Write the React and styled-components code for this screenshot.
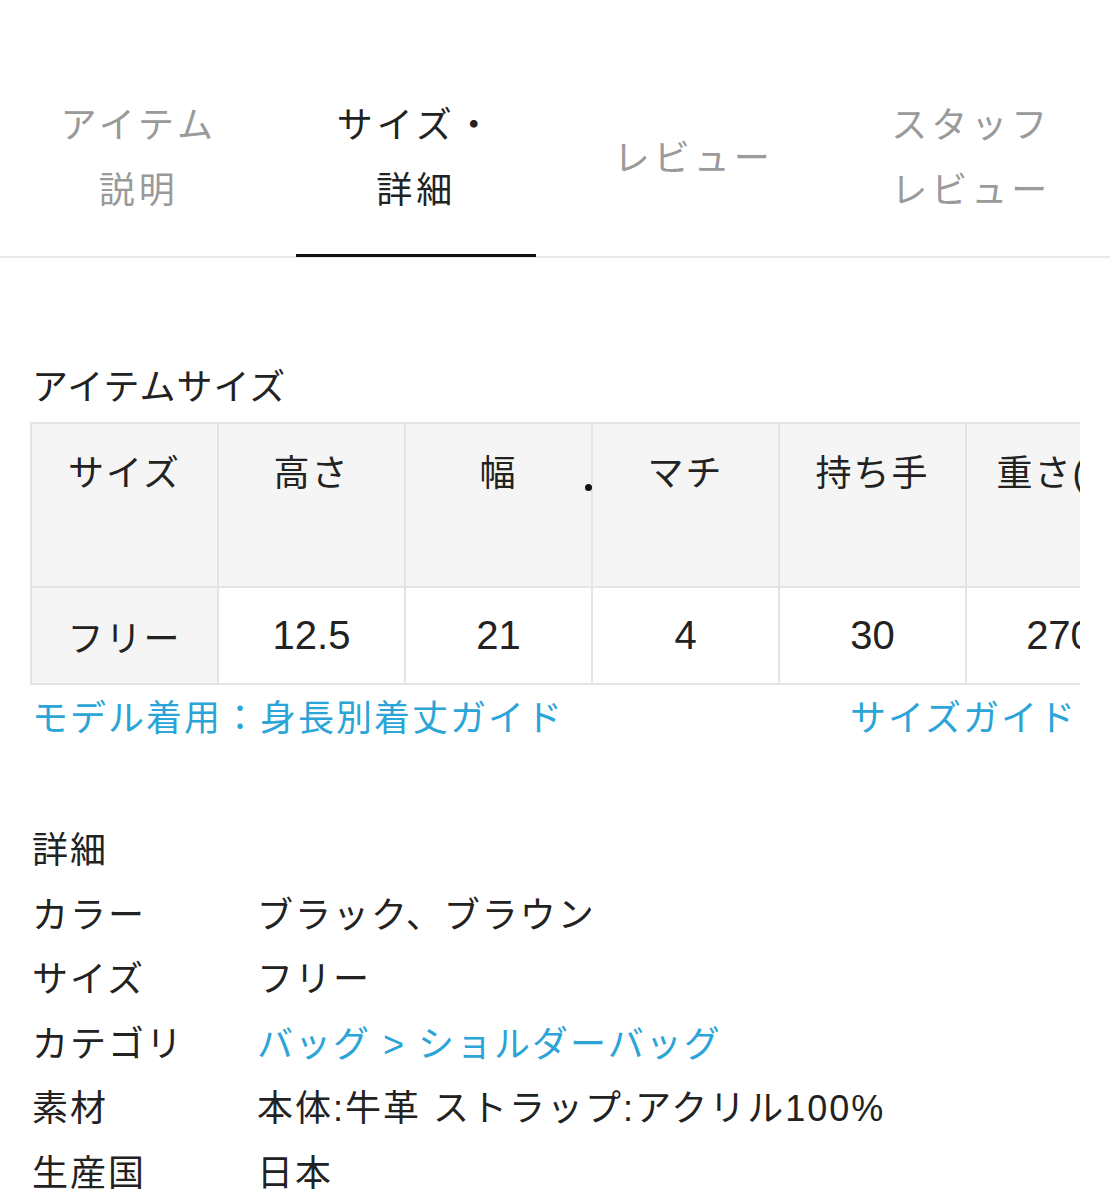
import React from "react";
import styled, { createGlobalStyle } from "styled-components";

const Global = createGlobalStyle`
  html, body { margin: 0; padding: 0; background: #fff; }
  body {
    font-family: "Liberation Sans", "Noto Sans CJK JP", sans-serif;
    color: #222;
    -webkit-font-smoothing: antialiased;
  }
  * { box-sizing: border-box; }
`;

const Page = styled.div`
  width: 1110px;
  min-height: 1200px;
  overflow: hidden;
`;

const TabBar = styled.nav`
  display: grid;
  grid-template-columns: repeat(4, 1fr);
  height: 258px;
  border-bottom: 2px solid #e8e8e8;
`;

const Tab = styled.div`
  position: relative;
  display: flex;
  align-items: center;
  justify-content: center;
  padding-top: 60px;
  text-align: center;
  font-size: 36px;
  line-height: 65px;
  letter-spacing: 4px;
  color: ${(p) => (p.$active ? "#222" : "#9a9a9a")};

  &::after {
    content: "";
    display: ${(p) => (p.$active ? "block" : "none")};
    position: absolute;
    left: 50%;
    bottom: -1px;
    width: 240px;
    height: 3px;
    transform: translateX(-50%);
    background: #111;
  }
`;

const Content = styled.main`
  padding: 110px 30px 0;
`;

const SectionTitle = styled.h2`
  margin: 0 0 14px 2px;
  font-size: 36px;
  font-weight: 400;
  line-height: 40px;
  letter-spacing: 1px;
  color: #222;
`;

const TableWrap = styled.div`
  position: relative;
  width: 1050px;
  overflow: hidden;
`;

const Table = styled.table`
  width: 1122px;
  table-layout: fixed;
  border-collapse: collapse;
  font-size: 36px;
  letter-spacing: 2px;
  color: #222;
`;

const HeadCell = styled.th`
  width: 187px;
  height: 164px;
  padding: 24px 0 0;
  vertical-align: top;
  text-align: center;
  font-weight: 400;
  line-height: 52px;
  white-space: nowrap;
  background: #f5f5f5;
  border: 2px solid #e4e4e4;
`;

const RowHead = styled.th`
  height: 97px;
  padding: 0;
  text-align: center;
  font-weight: 400;
  background: #f5f5f5;
  border: 2px solid #e4e4e4;
`;

const Cell = styled.td`
  height: 97px;
  padding: 0;
  text-align: center;
  font-size: 40px;
  letter-spacing: 0;
  white-space: nowrap;
  background: #fff;
  border: 2px solid #e4e4e4;
`;

const StrayDot = styled.span`
  position: absolute;
  left: 555px;
  top: 62px;
  width: 7px;
  height: 7px;
  border-radius: 50%;
  background: #111;
`;

const LinkRow = styled.div`
  display: flex;
  justify-content: space-between;
  align-items: center;
  margin-top: 12px;
  padding: 0 3px 0 2px;
  height: 44px;
`;

const TextLink = styled.a`
  font-size: 36px;
  line-height: 44px;
  letter-spacing: 2px;
  color: #2ba4d8;
  text-decoration: none;
`;

const Details = styled.dl`
  display: grid;
  grid-template-columns: 225px 1fr;
  grid-auto-rows: 64.5px;
  align-items: center;
  margin: 78px 0 0 2px;
  font-size: 36px;
  line-height: 44px;
  letter-spacing: 2px;
`;

const DetailsTitle = styled.dt`
  grid-column: 1 / -1;
  color: #222;
`;

const Label = styled.dt`
  color: #222;
`;

const Value = styled.dd`
  margin: 0;
  color: ${(p) => (p.$link ? "#2ba4d8" : "#222")};
  white-space: nowrap;
`;

const tabs = [
  { label: ["アイテム", "説明"] },
  { label: ["サイズ・", "詳細"], active: true },
  { label: ["レビュー"] },
  { label: ["スタッフ", "レビュー"] },
];

const headers = ["サイズ", "高さ", "幅", "マチ", "持ち手", "重さ(g)"];
const values = ["12.5", "21", "4", "30", "270"];

const details = [
  { label: "カラー", value: "ブラック、ブラウン" },
  { label: "サイズ", value: "フリー" },
  { label: "カテゴリ", value: "バッグ > ショルダーバッグ", link: true },
  { label: "素材", value: "本体:牛革 ストラップ:アクリル100%" },
  { label: "生産国", value: "日本" },
];

export default function App() {
  return (
    <Page>
      <Global />
      <TabBar>
        {tabs.map((t, i) => (
          <Tab key={i} $active={t.active}>
            <span>
              {t.label.map((l, j) => (
                <React.Fragment key={j}>
                  {j > 0 && <br />}
                  {l}
                </React.Fragment>
              ))}
            </span>
          </Tab>
        ))}
      </TabBar>
      <Content>
        <SectionTitle>アイテムサイズ</SectionTitle>
        <TableWrap>
          <Table>
            <thead>
              <tr>
                {headers.map((h) => (
                  <HeadCell key={h}>{h}</HeadCell>
                ))}
              </tr>
            </thead>
            <tbody>
              <tr>
                <RowHead>フリー</RowHead>
                {values.map((v, i) => (
                  <Cell key={i}>{v}</Cell>
                ))}
              </tr>
            </tbody>
          </Table>
          <StrayDot />
        </TableWrap>
        <LinkRow>
          <TextLink href="#">モデル着用：身長別着丈ガイド</TextLink>
          <TextLink href="#">サイズガイド</TextLink>
        </LinkRow>
        <Details>
          <DetailsTitle>詳細</DetailsTitle>
          {details.map((d) => (
            <React.Fragment key={d.label}>
              <Label>{d.label}</Label>
              <Value $link={d.link}>{d.value}</Value>
            </React.Fragment>
          ))}
        </Details>
      </Content>
    </Page>
  );
}
